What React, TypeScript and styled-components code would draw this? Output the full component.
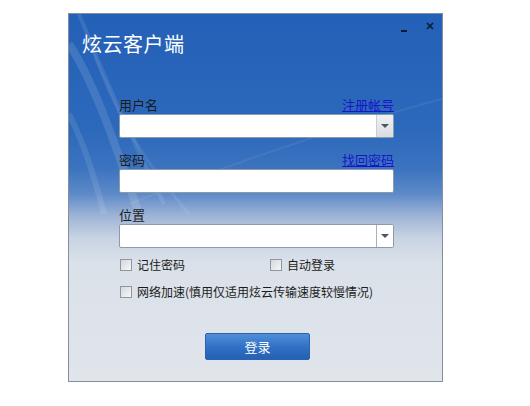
import React, { useState } from "react";
import styled, { createGlobalStyle } from "styled-components";

const GlobalStyle = createGlobalStyle`
  html, body {
    margin: 0;
    padding: 0;
    background: #ffffff;
  }
  * {
    box-sizing: border-box;
  }
`;

const Page = styled.div`
  padding: 13px 0 0 68px;
  font-family: "Noto Sans CJK SC", "Liberation Sans", sans-serif;
`;

const Window = styled.div`
  position: relative;
  width: 375px;
  height: 369px;
  border: 1px solid #868f99;
  overflow: hidden;
  display: flex;
  flex-direction: column;
  background: linear-gradient(
    to bottom,
    #2360b7 0%,
    #2d69bb 32%,
    #3b73bf 42%,
    #5d8ac8 49%,
    #9db4d6 55%,
    #c8d3e3 61%,
    #dbe1e9 68%,
    #e0e5ec 100%
  );
`;

const Streaks = styled.svg`
  position: absolute;
  left: 0;
  top: 0;
  width: 100%;
  height: 100%;
  pointer-events: none;
`;

const TitleBar = styled.div`
  position: relative;
  display: flex;
  justify-content: space-between;
  align-items: flex-start;
  padding-left: 13px;
  height: 72px;
`;

const Title = styled.h1`
  margin: 17px 0 0;
  font-size: 20px;
  font-weight: 400;
  line-height: 26px;
  color: #ffffff;
  letter-spacing: 0.5px;
`;

const Controls = styled.div`
  display: flex;
  align-items: flex-start;
  gap: 10px;
  padding: 4px 4px 0 0;
`;

const CtrlButton = styled.span`
  width: 16px;
  height: 16px;
  display: flex;
  align-items: center;
  justify-content: center;
  color: #0b1a33;
`;

const Form = styled.div`
  position: relative;
  display: flex;
  flex-direction: column;
  padding: 10px 48px 0 50px;
`;

const Field = styled.div<{ $gap?: number }>`
  display: flex;
  flex-direction: column;
  margin-bottom: ${(p) => p.$gap ?? 13}px;
`;

const LabelRow = styled.div`
  display: flex;
  justify-content: space-between;
  align-items: flex-end;
  height: 18px;
  font-size: 13px;
  line-height: 18px;
  color: #1b1b1b;
`;

const Link = styled.a`
  color: #1616c8;
  text-decoration: underline;
  cursor: pointer;
`;

const InputBox = styled.div`
  display: flex;
  height: 24px;
  background: #ffffff;
  border: 1px solid #8e9aa8;
  border-radius: 2px;
  overflow: hidden;
`;

const Input = styled.input`
  flex: 1;
  min-width: 0;
  border: none;
  outline: none;
  background: transparent;
  padding: 0 4px;
  font-size: 13px;
  font-family: inherit;
`;

const DropButton = styled.div<{ $shaded?: boolean }>`
  width: 17px;
  display: flex;
  align-items: center;
  justify-content: center;
  border-left: 1px solid ${(p) => (p.$shaded ? "#c9ced4" : "#a9b2bc")};
  background: ${(p) =>
    p.$shaded ? "linear-gradient(to bottom, #f0f1f3, #d9dde2)" : "#ffffff"};
`;

const Arrow = styled.span`
  width: 0;
  height: 0;
  border-left: 4px solid transparent;
  border-right: 4px solid transparent;
  border-top: 4px solid #4b5662;
`;

const CheckRow = styled.div`
  display: flex;
  align-items: center;
  height: 13px;
  margin-bottom: 14px;
  font-size: 12px;
  color: #1b1b1b;
`;

const CheckItem = styled.label<{ $width?: number }>`
  display: flex;
  align-items: center;
  gap: 5px;
  width: ${(p) => (p.$width ? `${p.$width}px` : "auto")};
  cursor: pointer;
  white-space: nowrap;
`;

const Box = styled.span`
  width: 12px;
  height: 12px;
  margin-left: 1px;
  border: 1px solid #8f969e;
  background: linear-gradient(135deg, #d4d8dd, #f6f7f8);
  display: flex;
  align-items: center;
  justify-content: center;
  font-size: 10px;
  line-height: 1;
  color: #1b1b1b;
`;

const ButtonRow = styled.div`
  display: flex;
  justify-content: center;
  margin-top: 21px;
  padding-left: 2px;
`;

const LoginButton = styled.button`
  width: 105px;
  height: 27px;
  border: 1px solid #2c62ab;
  border-radius: 2px;
  background: linear-gradient(to bottom, #4f8fd9, #2f6fc3 55%, #2561b4);
  color: #ffffff;
  font-family: inherit;
  font-size: 13px;
  cursor: pointer;
`;

const Check = ({ text, width }: { text: string; width?: number }) => {
  const [on, setOn] = useState(false);
  return (
    <CheckItem $width={width} onClick={() => setOn(!on)}>
      <Box>{on ? "✓" : ""}</Box>
      <span>{text}</span>
    </CheckItem>
  );
};

export default function App() {
  return (
    <Page>
      <GlobalStyle />
      <Window>
        <Streaks viewBox="0 0 373 367" preserveAspectRatio="none">
          <path d="M0 30 C 20 60, 40 110, 70 200" stroke="#ffffff" strokeOpacity="0.12" strokeWidth="8" fill="none" />
          <path d="M10 0 C 30 50, 55 110, 95 190" stroke="#ffffff" strokeOpacity="0.1" strokeWidth="4" fill="none" />
          <path d="M25 40 C 40 80, 60 130, 120 200" stroke="#ffffff" strokeOpacity="0.08" strokeWidth="3" fill="none" />
          <path d="M0 100 C 15 130, 25 160, 35 200" stroke="#ffffff" strokeOpacity="0.1" strokeWidth="6" fill="none" />
          <path d="M60 190 C 160 150, 280 110, 373 85" stroke="#ffffff" strokeOpacity="0.07" strokeWidth="2" fill="none" />
        </Streaks>
        <TitleBar>
          <Title>炫云客户端</Title>
          <Controls>
            <CtrlButton>
              <svg width="10" height="16" viewBox="0 0 10 16">
                <rect x="2" y="12" width="6" height="2" fill="currentColor" />
              </svg>
            </CtrlButton>
            <CtrlButton>
              <svg width="10" height="10" viewBox="0 0 10 10">
                <path d="M2 2 L8 8 M8 2 L2 8" stroke="currentColor" strokeWidth="1.6" />
              </svg>
            </CtrlButton>
          </Controls>
        </TitleBar>
        <Form>
          <Field>
            <LabelRow>
              <span>用户名</span>
              <Link>注册帐号</Link>
            </LabelRow>
            <InputBox>
              <Input />
              <DropButton $shaded>
                <Arrow />
              </DropButton>
            </InputBox>
          </Field>
          <Field>
            <LabelRow>
              <span>密码</span>
              <Link>找回密码</Link>
            </LabelRow>
            <InputBox>
              <Input type="password" />
            </InputBox>
          </Field>
          <Field $gap={10}>
            <LabelRow>
              <span>位置</span>
            </LabelRow>
            <InputBox>
              <Input />
              <DropButton>
                <Arrow />
              </DropButton>
            </InputBox>
          </Field>
          <CheckRow>
            <Check text="记住密码" width={150} />
            <Check text="自动登录" />
          </CheckRow>
          <CheckRow>
            <Check text="网络加速(慎用仅适用炫云传输速度较慢情况)" />
          </CheckRow>
          <ButtonRow>
            <LoginButton>登录</LoginButton>
          </ButtonRow>
        </Form>
      </Window>
    </Page>
  );
}
